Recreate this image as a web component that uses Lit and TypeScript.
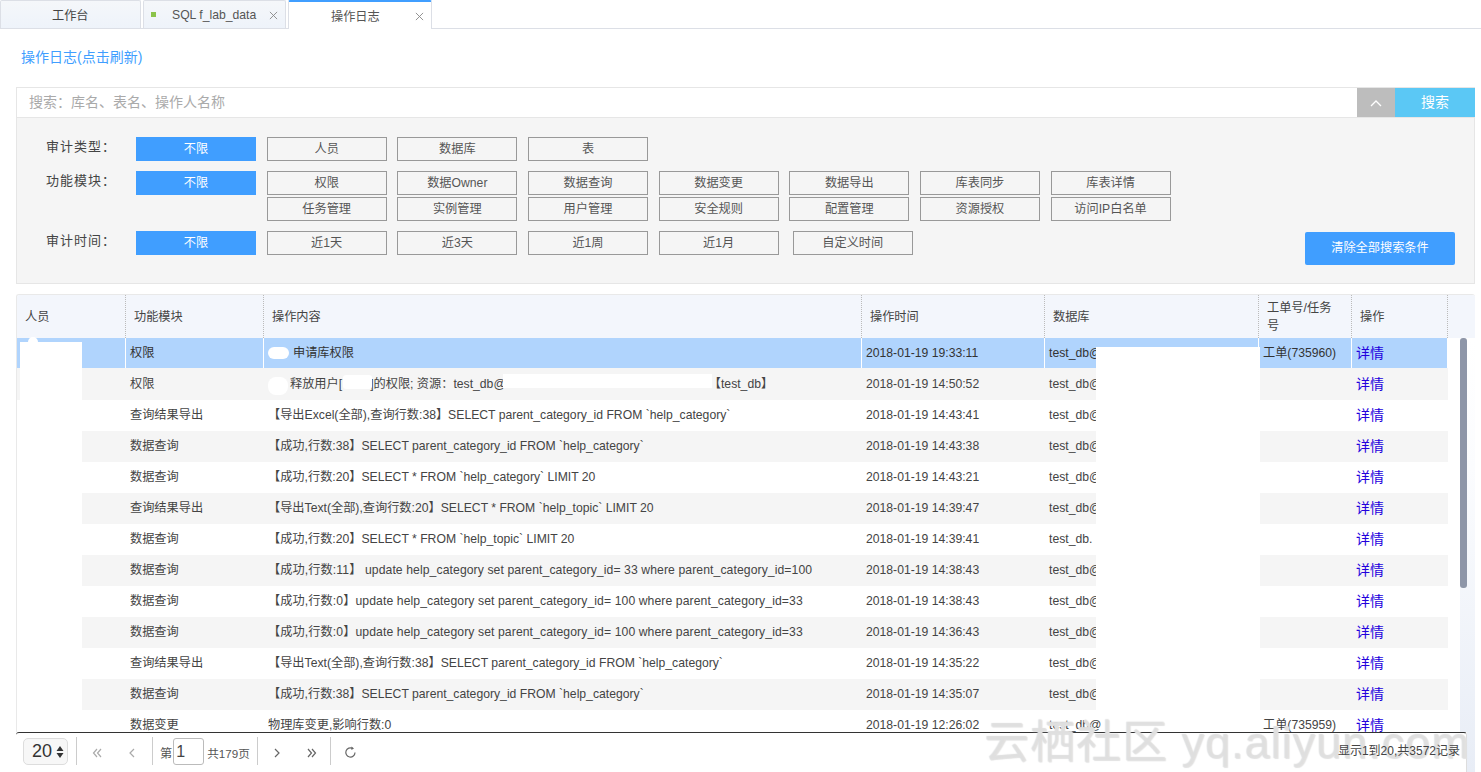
import { LitElement, html, css, svg } from "lit";
import { customElement } from "lit/decorators.js";

const moduleBtns1 = ["权限", "数据Owner", "数据查询", "数据变更", "数据导出", "库表同步", "库表详情"];
const moduleBtns2 = ["任务管理", "实例管理", "用户管理", "安全规则", "配置管理", "资源授权", "访问IP白名单"];
const gap = (w: number) => html`<span class="gap" style="width:${w}px"></span>`;
const rows: [string, unknown, string, string, string, boolean?][] = [
  ["权限", html`${gap(25)}申请库权限`, "2018-01-19 19:33:11", "test_db@", "工单(735960)"],
  ["权限", html`${gap(22)}释放用户[${gap(28)}]的权限; 资源：test_db@${gap(203)}【test_db】`, "2018-01-19 14:50:52", "test_db@", ""],
  ["查询结果导出", "【导出Excel(全部),查询行数:38】SELECT parent_category_id FROM `help_category`", "2018-01-19 14:43:41", "test_db@", ""],
  ["数据查询", "【成功,行数:38】SELECT parent_category_id FROM `help_category`", "2018-01-19 14:43:38", "test_db@", ""],
  ["数据查询", "【成功,行数:20】SELECT * FROM `help_category` LIMIT 20", "2018-01-19 14:43:21", "test_db@", ""],
  ["查询结果导出", "【导出Text(全部),查询行数:20】SELECT * FROM `help_topic` LIMIT 20", "2018-01-19 14:39:47", "test_db@", ""],
  ["数据查询", "【成功,行数:20】SELECT * FROM `help_topic` LIMIT 20", "2018-01-19 14:39:41", "test_db.", ""],
  ["数据查询", "【成功,行数:11】 update help_category set parent_category_id= 33 where parent_category_id=100", "2018-01-19 14:38:43", "test_db@", "", true],
  ["数据查询", "【成功,行数:0】update help_category set parent_category_id= 100 where parent_category_id=33", "2018-01-19 14:38:43", "test_db@", "", true],
  ["数据查询", "【成功,行数:0】update help_category set parent_category_id= 100 where parent_category_id=33", "2018-01-19 14:36:43", "test_db@", "", true],
  ["查询结果导出", "【导出Text(全部),查询行数:38】SELECT parent_category_id FROM `help_category`", "2018-01-19 14:35:22", "test_db@", ""],
  ["数据查询", "【成功,行数:38】SELECT parent_category_id FROM `help_category`", "2018-01-19 14:35:07", "test_db@", ""],
  ["数据变更", "物理库变更,影响行数:0", "2018-01-19 12:26:02", "test_db@", "工单(735959)"],
];

const closeIcon = svg`<path d="M1 1l8 8M9 1l-8 8" stroke="#888" stroke-width="1" fill="none"/>`;

@customElement("app-root")
export class AppRoot extends LitElement {
  static styles = css`
    :host { display: block; height: 772px; overflow: hidden; position: relative; background: #fff;
      font-family: "Liberation Sans", "Noto Sans CJK SC", sans-serif; font-size: 12.2px; color: #444; }
    .tabs { display: flex; height: 29px; border-bottom: 1px solid #dcdfe6; box-sizing: border-box; gap: 2px; }
    .tab { height: 28px; box-sizing: border-box; background: linear-gradient(#f5f7fa, #eef3fa); border: 1px solid #dcdfe6; border-bottom: none;
      border-radius: 2px 2px 0 0; display: flex; align-items: center; position: relative; color: #555; }
    .t1 { width: 141px; padding-left: 51px; color: #444; }
    .t2 { width: 143px; padding-left: 28px; }
    .t3 { width: 144px; padding-left: 42px; height: 29px; background: #fff; border-top: 2px solid #409eff; }
    .dot { position: absolute; left: 7px; top: 11px; width: 5px; height: 5px; background: #8bc34a; }
    .close { position: absolute; right: 7px; top: 10px; width: 9px; height: 9px; }
    .title { color: #409eff; font-size: 14px; line-height: 18px; margin: 19px 0 0 21px; }
    .search { display: flex; height: 30px; box-sizing: border-box; margin: 21px 6px 0 16px; border: 1px solid #e6e6e6; border-right: none; border-bottom: none; }
    .search .ph { flex: 1; color: #aaa; font-size: 14px; line-height: 28px; padding-left: 12px; background: #fff; }
    .search .up { width: 38px; background: #bdbdbd; display: flex; align-items: center; justify-content: center; }
    .search .go { width: 80px; background: #5bc8f5; color: #fff; font-size: 14px; text-align: center; line-height: 28px; }
    .panel { position: relative; height: 167px; box-sizing: border-box; margin: 0 6px 0 16px; background: #f5f5f5;
      border: 1px solid #e6e6e6; padding: 19px 0 0 29px; }
    .frow { display: flex; align-items: flex-start; margin-bottom: 10px; }
    .label { width: 90px; font-size: 13px; line-height: 18px; color: #444; letter-spacing: 1px; margin-top: 1px; }
    .btns { display: flex; flex-direction: column; gap: 2px; }
    .line { display: flex; gap: 10.67px; }
    .b { width: 120px; height: 24px; box-sizing: border-box; border: 1px solid #999; line-height: 22px; text-align: center; color: #555; background: #f5f5f5; }
    .sel { background: #409eff; border-color: #409eff; color: #fff; }
    .hidden { visibility: hidden; }
    .custom { margin-left: 3.5px; }
    .clear { position: absolute; right: 19px; top: 114px; width: 150px; height: 33px; background: #409eff; color: #fff;
      border-radius: 2px; text-align: center; line-height: 33px; }
    .table { position: relative; margin: 10px 6px 0 16px; height: 478px; box-sizing: border-box; border: 1px solid #e9e9e9; border-bottom: none; border-right: none;
      border-radius: 3px 3px 0 0; overflow: hidden; }
    .grid { display: grid; grid-template-columns: 109px 138px 598px 183px 214px 93px 96px; }
    .head { height: 43px; background: #f3f6fc; }
    .head > div { display: flex; align-items: center; padding: 0 8px; box-sizing: border-box; border-right: 1px dotted #bbb; line-height: 18px; color: #444; }
    .body { height: 394px; overflow: hidden; width: 1431px; }
    .row { height: 31px; line-height: 31px; color: #444; }
    .row:nth-child(even) { background: #f5f5f5; }
    .row:nth-child(2) { height: 32px; line-height: 32px; }
    .row:first-child { background: #b0d4fd; height: 30px; line-height: 30px; color: #333; }
    .row:first-child > div { border-right: 1px solid #fff; }
    .row > div { padding-left: 4px; white-space: nowrap; overflow: hidden; box-sizing: border-box; }
    .wide { letter-spacing: 0.09px; }
    .gap { display: inline-block; }
    .row a { color: #2200dd; font-size: 14px; text-decoration: none; }
    .track { position: absolute; left: 1443px; top: 43px; right: 0; bottom: 0; background: linear-gradient(#fff, #fbfcfe 30%, #e8edf6); }
    .thumb { position: absolute; left: 1443px; top: 43px; width: 7px; height: 250px; background: #8e96a8; border-radius: 3px; }
    .foot { position: absolute; left: 0; right: 0; bottom: 0; height: 40px; box-sizing: border-box;
      border-top: 1px solid #333; border-right: 1px solid #ddd; border-radius: 3px 3px 0 0; display: flex; align-items: center; padding-left: 7px; color: #555; }
    .footwrap { position: absolute; left: 16px; width: 1451px; bottom: 0; height: 40px; background: #fff; }
    .size { width: 45px; height: 27px; box-sizing: border-box; border: 1px solid #ddd; border-radius: 5px; font-size: 18px; background: #f7f7f7;
      display: flex; align-items: center; justify-content: flex-end; padding-right: 3px; gap: 4px; color: #333; margin-top: -2px; }
    .sep { width: 1px; height: 28px; background: #ccc; margin-top: -3px; }
    .s1 { margin-left: 8px; }
    .s2 { margin-left: 3px; }
    .s3 { margin-left: 7px; }
    .pl { margin-left: 2px; }
    .ic { display: flex; justify-content: center; align-items: center; width: 35px; }
    .di { margin-left: 7px; }
    .input { width: 31px; height: 27px; box-sizing: border-box; border: 1px solid #bbb; border-radius: 3px; font-size: 16px; line-height: 25px; padding-left: 2px; margin: -2px 3px 0 1px; color: #444; }
    .pages { font-size: 11.6px; }
    .total { position: absolute; right: 6px; top: 8px; color: #444; z-index: 2; font-size: 12px; }
    .mask { position: absolute; background: #fff; }
    .m1 { left: 20px; top: 342px; width: 62px; height: 370px; }
    .m1b { left: 17px; top: 400px; width: 65px; height: 330px; }
    .m2 { left: 1096px; top: 347px; width: 164px; height: 363px; }
    .m3 { left: 268px; top: 347px; width: 21px; height: 12px; border-radius: 6px; }
    .m4 { left: 268px; top: 377px; width: 20px; height: 18px; border-radius: 8px; }
    .m5 { left: 343px; top: 375px; width: 29px; height: 14px; border-radius: 3px; }
    .m6 { left: 503px; top: 374px; width: 209px; height: 14px; }
    .m7 { left: 28px; top: 337px; width: 10px; height: 8px; border-radius: 5px 5px 0 0; }
    .wm { position: absolute; left: 984px; top: 714px; font-size: 45px; line-height: 58px; white-space: nowrap; color: rgba(255,255,255,.2);
      text-shadow: 0 0 1px #d8d8d8, 1px 1px 1px #e4e4e4; letter-spacing: 1px; pointer-events: none; z-index: 1; }
  `;

  private chev(d: string, color = "#666") {
    return html`<svg width="12" height="12" viewBox="0 0 12 12"><path d=${d} fill="none" stroke=${color} stroke-width="1.2"/></svg>`;
  }

  render() {
    return html`
      <div class="tabs">
        <div class="tab t1">工作台</div>
        <div class="tab t2"><span class="dot"></span>SQL f_lab_data<svg class="close" viewBox="0 0 10 10">${closeIcon}</svg></div>
        <div class="tab t3">操作日志<svg class="close" viewBox="0 0 10 10">${closeIcon}</svg></div>
      </div>
      <div class="title">操作日志(点击刷新)</div>
      <div class="search">
        <div class="ph">搜索：库名、表名、操作人名称</div>
        <div class="up"><svg width="12" height="8" viewBox="0 0 12 8"><path d="M1 7l5-5 5 5" fill="none" stroke="#fff" stroke-width="1.3"/></svg></div>
        <div class="go">搜索</div>
      </div>
      <div class="panel">
        <div class="frow"><div class="label">审计类型：</div><div class="btns"><div class="line">
          <div class="b sel">不限</div>${["人员", "数据库", "表"].map((t) => html`<div class="b">${t}</div>`)}
        </div></div></div>
        <div class="frow"><div class="label">功能模块：</div><div class="btns">
          <div class="line"><div class="b sel">不限</div>${moduleBtns1.map((t) => html`<div class="b">${t}</div>`)}</div>
          <div class="line"><div class="b hidden"></div>${moduleBtns2.map((t) => html`<div class="b">${t}</div>`)}</div>
        </div></div>
        <div class="frow"><div class="label">审计时间：</div><div class="btns"><div class="line">
          <div class="b sel">不限</div>${["近1天", "近3天", "近1周", "近1月"].map((t) => html`<div class="b">${t}</div>`)}<div class="b custom">自定义时间</div>
        </div></div></div>
        <div class="clear">清除全部搜索条件</div>
      </div>
      <div class="table">
        <div class="grid head">
          ${["人员", "功能模块", "操作内容", "操作时间", "数据库", "工单号/任务号", "操作"].map((t) => html`<div>${t}</div>`)}
        </div>
        <div class="body">
          ${rows.map((r) => html`<div class="grid row">
            <div></div><div>${r[0]}</div><div class=${r[5] ? "wide" : ""}>${r[1]}</div><div>${r[2]}</div><div>${r[3]}</div><div>${r[4]}</div><div><a>详情</a></div>
          </div>`)}
        </div>
        <div class="track"></div>
        <div class="thumb"></div>
      </div>
      <div class="mask m1"></div><div class="mask m1b"></div><div class="mask m7"></div><div class="mask m2"></div>
      <div class="mask m3"></div><div class="mask m4"></div><div class="mask m5"></div><div class="mask m6"></div>
      <div class="footwrap">
        <div class="foot">
          <div class="size">20<svg width="8" height="14" viewBox="0 0 8 14"><path d="M4 1l3.5 5h-7zM4 13l3.5-5h-7z" fill="#333"/></svg></div>
          <div class="sep s1"></div>
          <div class="ic pl">${this.chev("M6 2L2.5 6 6 10M10 2L6.5 6 10 10", "#aaa")}</div>
          <div class="ic">${this.chev("M8 2L4 6l4 4", "#aaa")}</div>
          <div class="sep s2"></div>
          <span class="di">第</span><div class="input">1</div><span class="pages">共179页</span>
          <div class="sep s3"></div>
          <div class="ic pl">${this.chev("M4 2l4 4-4 4")}</div>
          <div class="ic">${this.chev("M2 2l3.5 4L2 10M6 2l3.5 4L6 10")}</div>
          <div class="sep"></div>
          <div class="ic pl"><svg width="13" height="13" viewBox="0 0 13 13"><path d="M8.6 2.4A4.6 4.6 0 1 0 11 6.5" fill="none" stroke="#666" stroke-width="1.2"/><path d="M7.4 0.5l2.6 2-2.6 1.6z" fill="#666"/></svg></div>
          <div class="total">显示1到20,共3572记录</div>
        </div>
      </div>
      <div class="wm">云栖社区 yq.aliyun.com</div>
    `;
  }
}
